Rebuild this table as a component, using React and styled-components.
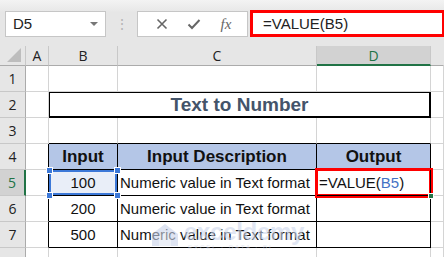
import React from "react";
import styled, { createGlobalStyle } from "styled-components";

const GlobalStyle = createGlobalStyle`
  html, body { margin: 0; padding: 0; background: #fff; }
  body { font-family: "Liberation Sans", Arial, sans-serif; }
`;

const COLS = "26px 23px 69px 199px 114px 1fr";
const GRID = "#d4d4d4";
const INK = "#000";

export default function App() {
  const rows = [
    { n: 1 },
    { n: 2, title: true },
    { n: 3, above: true },
    { n: 4, head: true },
    { n: 5, data: ["100", "Numeric value in Text format"], active: true },
    { n: 6, data: ["200", "Numeric value in Text format"] },
    { n: 7, data: ["500", "Numeric value in Text format"], last: true },
    { n: "" },
  ];

  return (
    <>
      <GlobalStyle />
      <Page>
        <FormulaBar>
          <NameBox>
            D5
            <Caret />
          </NameBox>
          <Grip>⋮</Grip>
          <IconBox>
            <svg width="12" height="12" viewBox="0 0 12 12">
              <path d="M1.5 1.5 L10.5 10.5 M10.5 1.5 L1.5 10.5" stroke="#666" strokeWidth="1.6" fill="none" />
            </svg>
            <svg width="14" height="12" viewBox="0 0 14 12">
              <path d="M1.5 6.5 L5 10 L12.5 2" stroke="#666" strokeWidth="2" fill="none" />
            </svg>
            <Fx>fx</Fx>
          </IconBox>
          <FormulaInput>=VALUE(B5)</FormulaInput>
        </FormulaBar>

        <Sheet>
          <Corner>
            <svg width="16" height="16" viewBox="0 0 16 16">
              <path d="M15 1 L15 15 L1 15 Z" fill="#bdbdbd" />
            </svg>
          </Corner>
          <ColHead>A</ColHead>
          <ColHead>B</ColHead>
          <ColHead>C</ColHead>
          <ColHead $active>D</ColHead>
          <ColHead $last />

          {rows.map((r, i) => (
            <React.Fragment key={i}>
              <RowHead $active={r.active}>{r.n}</RowHead>
              {r.title ? (
                <>
                  <Cell $right={GRID} />
                  <TitleCell>Text to Number</TitleCell>
                  <Cell />
                </>
              ) : r.head ? (
                <>
                  <Cell $right={INK} />
                  <HeadCell>Input</HeadCell>
                  <HeadCell>Input Description</HeadCell>
                  <HeadCell>Output</HeadCell>
                  <Cell />
                </>
              ) : r.data ? (
                <>
                  <Cell $right={INK} />
                  <DataCell $center $selected={r.active}>
                    {r.data[0]}
                    {r.active && (
                      <>
                        <Handle $x="left" $y="top" />
                        <Handle $x="right" $y="top" />
                        <Handle $x="left" $y="bottom" />
                        <Handle $x="right" $y="bottom" />
                      </>
                    )}
                  </DataCell>
                  <DataCell>{r.data[1]}</DataCell>
                  <DataCell $editing={r.active}>
                    {r.active && (
                      <>
                        =VALUE(<Ref>B5</Ref>)
                        <FillHandle />
                      </>
                    )}
                  </DataCell>
                  <Cell />
                </>
              ) : (
                <>
                  <Cell />
                  <Cell $bottom={r.above ? INK : GRID} />
                  <Cell $bottom={r.above ? INK : GRID} />
                  <Cell $bottom={r.above ? INK : GRID} />
                  <Cell />
                </>
              )}
            </React.Fragment>
          ))}

          <Watermark>
            <svg width="30" height="26" viewBox="0 0 30 26">
              <path d="M2 12 L15 2 L28 12 L28 24 L2 24 Z" fill="#c9d3ea" />
              <path d="M9 14 L15 9 L21 14 L21 24 L9 24 Z" fill="#dfe5f3" />
            </svg>
            <WatermarkText>
              <span>exceldemy</span>
              <small>EXCEL · DATA · BI</small>
            </WatermarkText>
          </Watermark>
        </Sheet>
      </Page>
    </>
  );
}

const Page = styled.div`
  width: 444px;
  height: 257px;
  overflow: hidden;
  background: #fff;
`;

const FormulaBar = styled.div`
  height: 46px;
  box-sizing: border-box;
  background: linear-gradient(#f3f3f3 0, #e9e9e9 10px, #e6e6e6 12px);
  display: flex;
  align-items: flex-start;
  padding: 10px 0 0 5px;
`;

const NameBox = styled.div`
  position: relative;
  width: 101px;
  height: 26px;
  margin-top: 1px;
  box-sizing: border-box;
  background: #fff;
  border: 1px solid #c6c6c6;
  font-size: 15px;
  color: #222;
  line-height: 24px;
  padding-left: 7px;
`;

const Caret = styled.span`
  position: absolute;
  right: 7px;
  top: 10px;
  border-left: 4px solid transparent;
  border-right: 4px solid transparent;
  border-top: 4px solid #777;
`;

const Grip = styled.div`
  width: 31px;
  text-align: center;
  color: #b5b5b5;
  font-size: 14px;
  line-height: 26px;
  margin-top: 1px;
`;

const IconBox = styled.div`
  width: 111px;
  height: 26px;
  margin-top: 1px;
  box-sizing: border-box;
  background: #fff;
  border: 1px solid #c6c6c6;
  display: flex;
  align-items: center;
  justify-content: space-around;
  padding: 0 6px 0 8px;
`;

const Fx = styled.span`
  font-family: "Liberation Serif", "Times New Roman", serif;
  font-style: italic;
  font-size: 15px;
  color: #666;
`;

const FormulaInput = styled.div`
  flex: 1;
  height: 27px;
  margin-left: 2px;
  box-sizing: border-box;
  background: #fff;
  border: 3px solid #f00;
  border-right-width: 2px;
  font-size: 15px;
  line-height: 21px;
  color: #222;
  padding-left: 10px;
`;

const Sheet = styled.div`
  position: relative;
  display: grid;
  grid-template-columns: ${COLS};
  grid-template-rows: 20px repeat(8, 26px);
`;

const Corner = styled.div`
  background: #e6e6e6;
  border-right: 1px solid #c8c8c8;
  border-bottom: 1px solid #ababab;
  display: flex;
  align-items: flex-end;
  justify-content: flex-end;
  padding: 0 3px 2px 0;
`;

const ColHead = styled.div`
  background: ${(p) => (p.$active ? "#d2d2d2" : "#e6e6e6")};
  border-right: 1px solid ${(p) => (p.$last ? "transparent" : "#c8c8c8")};
  border-bottom: ${(p) => (p.$active ? "2px solid #217346" : "1px solid #ababab")};
  display: flex;
  align-items: center;
  justify-content: center;
  font-family: "Open Sans", sans-serif;
  font-size: 14px;
  color: ${(p) => (p.$active ? "#217346" : "#222")};
`;

const RowHead = styled.div`
  background: ${(p) => (p.$active ? "#d2d2d2" : "#e6e6e6")};
  border-right: ${(p) => (p.$active ? "2px solid #217346" : "1px solid #ababab")};
  border-bottom: 1px solid #c8c8c8;
  display: flex;
  align-items: center;
  justify-content: center;
  font-family: "Open Sans", sans-serif;
  font-size: 14px;
  color: ${(p) => (p.$active ? "#217346" : "#222")};
`;

const Cell = styled.div`
  position: relative;
  border-right: 1px solid ${(p) => p.$right || GRID};
  border-bottom: 1px solid ${(p) => p.$bottom || GRID};
  font-size: 15px;
  color: #111;
  display: flex;
  align-items: center;
`;

const TitleCell = styled.div`
  grid-column: span 3;
  margin: -1px 0 0 -1px;
  border: 2.5px solid #000;
  display: flex;
  align-items: center;
  justify-content: center;
  font-size: 19px;
  font-weight: 700;
  color: #44546a;
  background: #fff;
`;

const HeadCell = styled(Cell)`
  background: #b4c6e7;
  border-right-color: ${INK};
  border-bottom-color: ${INK};
  justify-content: center;
  font-size: 17px;
  font-weight: 700;
`;

const DataCell = styled(Cell)`
  border-right-color: ${INK};
  border-bottom-color: ${INK};
  justify-content: ${(p) => (p.$center ? "center" : "flex-start")};
  padding-left: ${(p) => (p.$center ? "0" : "2px")};
  white-space: nowrap;
  overflow: visible;
  background: ${(p) => (p.$selected ? "#e9eef8" : "transparent")};
  box-shadow: ${(p) =>
    p.$selected
      ? "inset 0 0 0 2px #3c78d8"
      : p.$editing
      ? "0 0 0 2px #f00, inset 0 0 0 1px #f00"
      : "none"};
  z-index: ${(p) => (p.$editing || p.$selected ? 2 : 0)};
`;

const Handle = styled.span`
  position: absolute;
  width: 5px;
  height: 5px;
  background: #3c78d8;
  border: 1px solid #fff;
  ${(p) => (p.$x === "left" ? "left: -3px;" : "right: -4px;")}
  ${(p) => (p.$y === "top" ? "top: -3px;" : "bottom: -4px;")}
`;

const Ref = styled.span`
  color: #4472c4;
`;

const FillHandle = styled.span`
  position: absolute;
  right: -4px;
  bottom: -4px;
  width: 4px;
  height: 4px;
  background: #217346;
  border: 1px solid #fff;
`;

const Watermark = styled.div`
  position: absolute;
  left: 150px;
  top: 174px;
  display: flex;
  align-items: center;
  gap: 4px;
  opacity: 0.6;
  pointer-events: none;
  z-index: 3;
`;

const WatermarkText = styled.div`
  display: flex;
  flex-direction: column;
  line-height: 1;
  span {
    font-size: 24px;
    font-weight: 700;
    color: #ccd6ec;
    letter-spacing: -0.3px;
  }
  small {
    font-size: 6px;
    color: #d5dcea;
    letter-spacing: 2px;
    margin-left: 4px;
  }
`;
